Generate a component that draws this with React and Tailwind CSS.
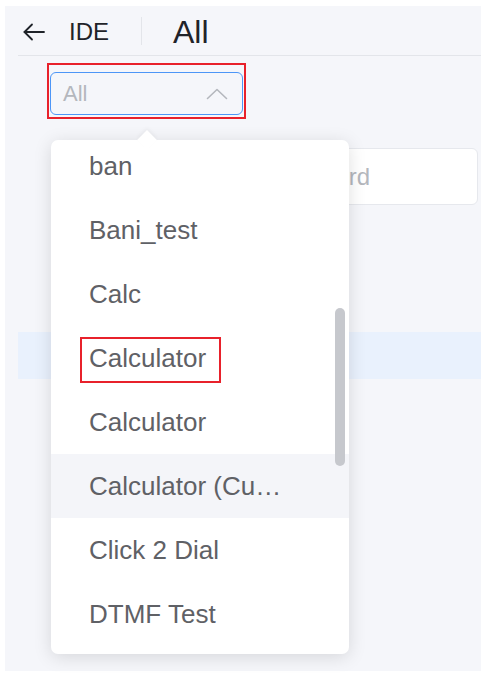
import React from 'react';

const items = [
  'ban',
  'Bani_test',
  'Calc',
  'Calculator',
  'Calculator',
  'Calculator (Cu…',
  'Click 2 Dial',
  'DTMF Test',
];

function BackArrow() {
  return (
    <svg width="24" height="24" viewBox="0 0 24 24" fill="none" stroke="#1f2329" strokeWidth="1.8" strokeLinecap="round" strokeLinejoin="round">
      <path d="M22 12H2.5" />
      <path d="M10 4.5L2.5 12l7.5 7.5" />
    </svg>
  );
}

function ChevronUp() {
  return (
    <svg width="22" height="12" viewBox="0 0 22 12" fill="none" stroke="#b4b7bd" strokeWidth="1.6" strokeLinecap="round" strokeLinejoin="round">
      <path d="M1.5 10.5L11 1.5l9.5 9" />
    </svg>
  );
}

export default function App() {
  return (
    <div
      className="w-[481px] h-[678px] bg-white pt-[6px] pl-[5px] pb-[7px] overflow-hidden"
      style={{ fontFamily: '"Liberation Sans", Arial, sans-serif' }}
    >
      <div className="relative h-full bg-[#f5f6fa]">
        {/* header */}
        <div className="ml-[13px] h-[50px] border-b border-[#e3e5ea] flex items-center">
          <div className="ml-[4px] mt-[2px]">
            <BackArrow />
          </div>
          <span className="ml-[23px] text-[24px] text-[#1f2329] leading-none mt-[2px]">IDE</span>
          <div className="ml-[32px] w-px h-[28px] bg-[#e3e5ea]" />
          <span className="ml-[31px] text-[32px] text-[#1f2329] leading-none mt-[2px]">All</span>
        </div>

        {/* select */}
        <div className="ml-[45px] mt-[16px] w-[193px] h-[43px] rounded-[6px] border-[1.5px] border-[#4d96f7] flex items-center justify-between pl-[12px] pr-[14px]">
          <span className="text-[22px] text-[#b4b7bd] leading-none">All</span>
          <ChevronUp />
        </div>

        {/* search box behind the dropdown */}
        <div className="ml-[180px] mt-[33px] w-[293px] h-[57px] rounded-[6px] border border-[#e6e8ed] bg-white flex items-center pl-[12px]">
          <span className="text-[24px] text-[#b4b7bd] leading-none">Search keyword</span>
        </div>

        {/* selected row behind the dropdown */}
        <div className="ml-[13px] mt-[127px] h-[47px] bg-[#e9f1fd]" />

        {/* red annotation around the select */}
        <div className="absolute left-[42px] top-[57px] w-[199px] h-[56px] border-2 border-[#e8212b]" />

        {/* dropdown */}
        <div className="absolute left-[46px] top-[134px] w-[298px] h-[514px] bg-white rounded-[7px] shadow-[0_3px_18px_rgba(0,0,0,0.13)]">
          <div className="absolute left-[89px] -top-[7px] w-[14px] h-[14px] bg-white rotate-45 shadow-[-2px_-2px_4px_rgba(0,0,0,0.04)]" />
          <div className="relative h-full overflow-hidden rounded-[7px]">
            <div className="-mt-[6px]">
              {items.map((name, i) => (
                <div
                  key={i}
                  className={`h-[64px] flex items-center pl-[38px] ${i === 5 ? 'bg-[#f4f5f9]' : ''}`}
                >
                  <span className="whitespace-nowrap text-[26px] text-[#5f6166] leading-[32px]">{name}</span>
                </div>
              ))}
            </div>
          </div>
          {/* scrollbar */}
          <div className="absolute left-[284px] top-[168px] w-[10px] h-[158px] rounded-full bg-[#c6c8cd]" />
          {/* red annotation around item */}
          <div className="absolute left-[29px] top-[197px] w-[141px] h-[46px] border-2 border-[#e8212b]" />
        </div>
      </div>
    </div>
  );
}
